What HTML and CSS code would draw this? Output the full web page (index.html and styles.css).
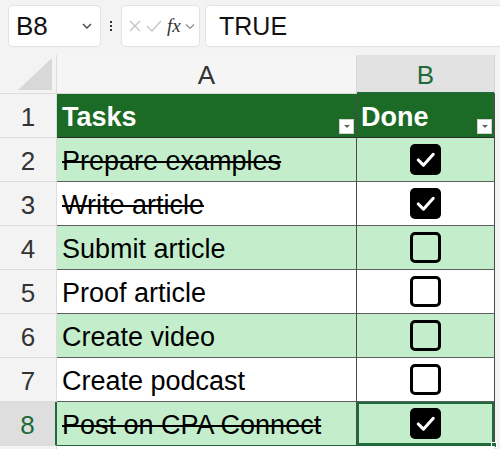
FILE: index.html
```html
<!DOCTYPE html>
<html>
<head>
<meta charset="utf-8">
<link rel="stylesheet" href="styles.css">
</head>
<body>
<div class="fbar">
  <div class="namebox">
    <span class="nb-text">B8</span>
    <svg class="chev" width="12" height="8" viewBox="0 0 12 8"><path d="M2 2 L6 6 L10 2" fill="none" stroke="#444" stroke-width="1.4"/></svg>
  </div>
  <div class="dots"><span></span><span></span><span></span></div>
  <div class="fxbox">
    <svg width="14" height="14" viewBox="0 0 14 14"><path d="M2 2 L12 12 M12 2 L2 12" stroke="#c4c4c4" stroke-width="1.3"/></svg>
    <svg width="16" height="14" viewBox="0 0 16 14"><path d="M1 7 L6 12 L15 2" fill="none" stroke="#c4c4c4" stroke-width="1.3"/></svg>
    <span class="fx">fx</span>
    <svg width="10" height="7" viewBox="0 0 10 7"><path d="M1 1.5 L5 5.5 L9 1.5" fill="none" stroke="#888" stroke-width="1.2"/></svg>
  </div>
  <div class="formula">TRUE</div>
</div>
<div class="sheet">
  <div class="corner"><svg width="36" height="34" viewBox="0 0 36 34"><path d="M34 0 L34 32 L0 32 Z" fill="#d8d8d8"/></svg></div>
  <div class="colhead">A</div>
  <div class="colhead sel">B</div>
  <div class="fill head"></div>

  <div class="rowhead">1</div>
  <div class="cell th">Tasks<span class="dd"></span></div>
  <div class="cell th b">Done<span class="dd"></span></div>
  <div class="fill"></div>

  <div class="rowhead">2</div>
  <div class="cell g done">Prepare examples</div>
  <div class="cell g b"><span class="cb on"><svg width="30" height="30" viewBox="0 0 30 30"><path d="M8 15.5 L13 20.5 L22.5 10" fill="none" stroke="#fff" stroke-width="3" stroke-linecap="round" stroke-linejoin="round"/></svg></span></div>
  <div class="fill"></div>

  <div class="rowhead">3</div>
  <div class="cell w done">Write article</div>
  <div class="cell w b"><span class="cb on"><svg width="30" height="30" viewBox="0 0 30 30"><path d="M8 15.5 L13 20.5 L22.5 10" fill="none" stroke="#fff" stroke-width="3" stroke-linecap="round" stroke-linejoin="round"/></svg></span></div>
  <div class="fill"></div>

  <div class="rowhead">4</div>
  <div class="cell g">Submit article</div>
  <div class="cell g b"><span class="cb"></span></div>
  <div class="fill"></div>

  <div class="rowhead">5</div>
  <div class="cell w">Proof article</div>
  <div class="cell w b"><span class="cb"></span></div>
  <div class="fill"></div>

  <div class="rowhead">6</div>
  <div class="cell g">Create video</div>
  <div class="cell g b"><span class="cb"></span></div>
  <div class="fill"></div>

  <div class="rowhead">7</div>
  <div class="cell w">Create podcast</div>
  <div class="cell w b"><span class="cb"></span></div>
  <div class="fill"></div>

  <div class="rowhead selrow">8</div>
  <div class="cell g done last">Post on CPA Connect</div>
  <div class="cell g b last active"><span class="cb on"><svg width="30" height="30" viewBox="0 0 30 30"><path d="M8 15.5 L13 20.5 L22.5 10" fill="none" stroke="#fff" stroke-width="3" stroke-linecap="round" stroke-linejoin="round"/></svg></span><span class="handle"></span></div>
  <div class="fill"></div>

  <div class="rowhead tail"></div>
  <div class="cell tailc"></div>
  <div class="cell tailc"></div>
  <div class="fill"></div>
</div>
</body>
</html>
```

FILE: styles.css
```css
* { box-sizing: border-box; }
html, body {
  margin: 0;
  padding: 0;
  width: 500px;
  height: 449px;
  overflow: hidden;
  background: #f3f3f3;
  font-family: "Liberation Sans", Arial, sans-serif;
}
.fbar {
  display: flex;
  align-items: center;
  height: 50px;
  padding: 5px 0 3px 8px;
  gap: 0;
}
.namebox {
  width: 93px;
  height: 42px;
  background: #fff;
  border: 1px solid #e2e2e2;
  border-radius: 5px;
  display: flex;
  align-items: center;
  justify-content: space-between;
  padding: 0 7px 0 7px;
}
.nb-text { font-size: 26px; color: #111; }
.dots {
  width: 20px;
  display: flex;
  flex-direction: column;
  align-items: center;
  gap: 2px;
}
.dots span { width: 2px; height: 2px; background: #333; }
.fxbox {
  width: 79px;
  height: 42px;
  background: #fff;
  border: 1px solid #e2e2e2;
  border-radius: 5px;
  display: flex;
  align-items: center;
  padding: 0 3px 0 6px;
  gap: 4px;
}
.fx {
  font-family: "Liberation Serif", serif;
  font-style: italic;
  font-size: 19px;
  color: #333;
  margin-left: 1px;
}
.formula {
  flex: 1;
  height: 42px;
  margin-left: 5px;
  background: #fff;
  border: 1px solid #e2e2e2;
  border-right: none;
  border-radius: 5px 0 0 5px;
  display: flex;
  align-items: center;
  padding-left: 13px;
  font-size: 25px;
  color: #111;
}
.sheet {
  display: grid;
  grid-template-columns: 57px 300px 138px 1fr;
  grid-template-rows: 39px 44px 44px 44px 44px 44px 44px 44px 44px 20px;
  margin-top: 5px;
}
.corner {
  background: #f3f3f3;
  border-right: 1px solid #dcdcdc;
  border-bottom: 1px solid #dcdcdc;
  display: flex;
  align-items: flex-end;
  justify-content: flex-end;
  padding: 0 2px 1px 0;
}
.colhead {
  background: #f5f5f5;
  border-right: 1px solid #d6d6d6;
  border-bottom: 1px solid #d6d6d6;
  display: flex;
  align-items: center;
  justify-content: center;
  font-size: 26px;
  color: #333;
  padding-top: 3px;
}
.colhead.sel {
  background: #e2e2e2;
  color: #1e6b39;
  border-bottom: 2px solid #1e6b39;
}
.fill { background: #f3f3f3; }
.rowhead {
  background: #f3f3f3;
  border-right: 1px solid #dcdcdc;
  border-bottom: 1px solid #dcdcdc;
  display: flex;
  align-items: center;
  justify-content: center;
  font-size: 26px;
  color: #333;
  padding-top: 4px;
}
.rowhead.selrow {
  background: #dedede;
  color: #1e6b39;
  border-right: 2px solid #1e6b39;
}
.rowhead.tail { border-bottom: none; }
.cell {
  position: relative;
  display: flex;
  align-items: center;
  padding-left: 5px;
  padding-top: 3px;
  font-size: 27px;
  color: #000;
  border-bottom: 1px solid #5e5e5e;
  border-right: 1px solid #4a4a4a;
  white-space: nowrap;
}
.cell.b { justify-content: center; padding-left: 0; padding-top: 0; }
.cell.th {
  background: #1b6a25;
  color: #fff;
  font-weight: bold;
  font-size: 27px;
  border-bottom: 1px solid #2c2c2c;
  padding-top: 4px;
}
.cell.th.b { justify-content: flex-start; padding-left: 4px; padding-top: 4px; }
.cell.g { background: #c4eecb; }
.cell.w { background: #fff; }
.cell.done { text-decoration: line-through; text-decoration-thickness: 2px; }
.cell.last { border-bottom: 1px solid #1e6b39; }
.cell.tailc { background: #fff; border: none; }
.cell.tailc + .cell.tailc { border-right: 1px solid #d6d6d6; }
.dd {
  position: absolute;
  right: 2px;
  bottom: 3px;
  width: 15px;
  height: 15px;
  background: #fff;
  border: 1px solid #cfcfcf;
}
.dd::after {
  content: "";
  position: absolute;
  left: 4px;
  top: 5px;
  border-left: 3px solid transparent;
  border-right: 3px solid transparent;
  border-top: 3px solid #666;
}
.cb {
  width: 31px;
  height: 31px;
  border-radius: 5px;
  border: 3px solid #000;
  display: block;
}
.cb.on {
  background: #000;
  border: none;
}
.cb svg { display: block; width: 31px; height: 31px; }
.active {
  box-shadow: inset 0 0 0 2px #1e6b39;
}
.handle {
  position: absolute;
  right: -3px;
  bottom: -3px;
  width: 6px;
  height: 6px;
  background: #1e6b39;
  border: 1px solid #fff;
}
```
